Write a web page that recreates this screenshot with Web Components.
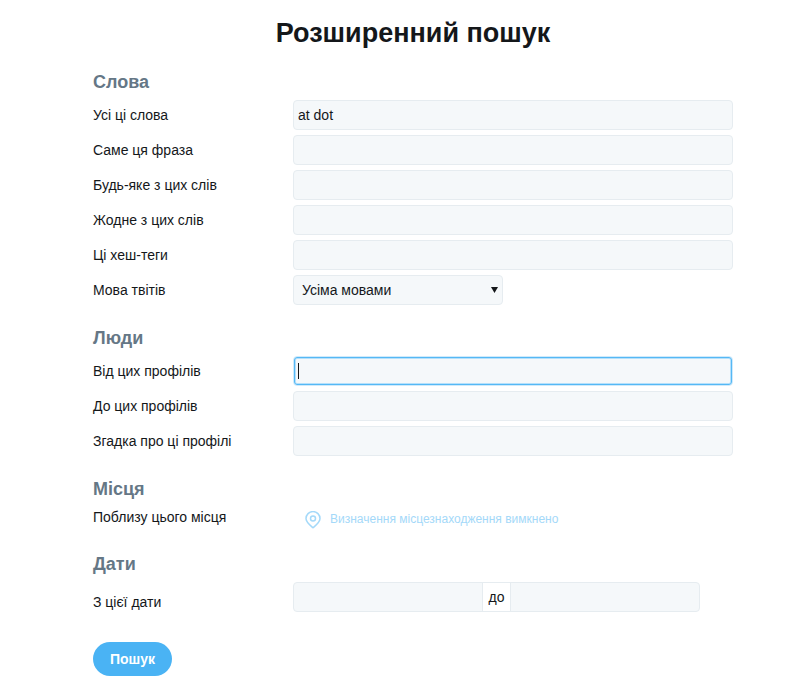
<!DOCTYPE html>
<html lang="uk"><head><meta charset="utf-8"><title>Розширений пошук</title>
<style>
html,body{margin:0;background:#fff}
body{font-family:"Liberation Sans",Arial,sans-serif;color:#14171a;font-size:14px}
</style></head><body>
<adv-page>
<adv-section heading="Слова" first>
<adv-row label="Усі ці слова"><adv-input value="at dot"></adv-input></adv-row>
<adv-row label="Саме ця фраза"><adv-input></adv-input></adv-row>
<adv-row label="Будь-яке з цих слів"><adv-input></adv-input></adv-row>
<adv-row label="Жодне з цих слів"><adv-input></adv-input></adv-row>
<adv-row label="Ці хеш-теги"><adv-input></adv-input></adv-row>
<adv-row label="Мова твітів"><adv-select value="Усіма мовами"></adv-select></adv-row>
</adv-section>
<adv-section heading="Люди" style="margin-top:17px">
<adv-row label="Від цих профілів"><adv-input focused></adv-input></adv-row>
<adv-row label="До цих профілів"><adv-input></adv-input></adv-row>
<adv-row label="Згадка про ці профілі"><adv-input></adv-input></adv-row>
</adv-section>
<adv-section heading="Місця" low style="margin-top:16px">
<adv-row label="Поблизу цього місця" compact><adv-geo>Визначення місцезнаходження вимкнено</adv-geo></adv-row>
</adv-section>
<adv-section heading="Дати" low style="margin-top:16px">
<adv-row label="З цієї дати" low style="margin-top:1px"><adv-dates></adv-dates></adv-row>
</adv-section>
<adv-button>Пошук</adv-button>
</adv-page>
<script>
function def(name,html,init){
  customElements.define(name,class extends HTMLElement{
    constructor(){super();this.attachShadow({mode:'open'}).innerHTML=html;}
    connectedCallback(){if(init)init(this,this.shadowRoot);}
  });
}
def('adv-page',`<style>
:host{display:block;width:640px;margin-left:93px;padding-bottom:22px}
h1{margin:0;font-size:27px;line-height:32px;font-weight:700;text-align:center;color:#14171a;padding-top:17px;height:49px;letter-spacing:0}
.b{display:flex;flex-direction:column}
</style><h1>Розширенний пошук</h1><div class="b"><slot></slot></div>`);
def('adv-section',`<style>
:host{display:block}
h2{margin:0;font-size:18px;line-height:22px;font-weight:700;color:#657786;height:34px;padding-top:5px;box-sizing:border-box}
:host([low]) h2{padding-top:6px}
.r{display:flex;flex-direction:column;gap:5px}
</style><h2></h2><div class="r"><slot></slot></div>`,(el,s)=>{s.querySelector('h2').textContent=el.getAttribute('heading');});
def('adv-row',`<style>
:host{display:flex;align-items:center;min-height:30px}
.l{width:200px;flex:none;font-size:14px;line-height:20px;color:#14171a}
:host([compact]) {align-items:flex-start;min-height:0;height:25px}
:host([compact]) .l{margin-top:1px}
:host([low]) .l{padding-top:10px}
.c{flex:1;min-width:0}
</style><div class="l"></div><div class="c"><slot></slot></div>`,(el,s)=>{s.querySelector('.l').textContent=el.getAttribute('label');});
def('adv-input',`<style>
:host{display:block}
.i{display:block;box-sizing:border-box;width:100%;height:30px;background:#f5f8fa;border:1px solid #e6ecf0;border-radius:4px;font-size:14px;line-height:28px;padding:0 4px;color:#14171a}
:host([focused]) .i{border-color:#cfeafb;box-shadow:inset 0 0 0 1px #55b8f5,inset 0 0 0 2px #b5e0fb;padding:0 3px;display:flex;align-items:center}
.k{display:none;width:1px;height:16px;background:#14171a;margin-left:1px}
:host([focused]) .k{display:block}
</style><div class="i"><span class="v"></span><span class="k"></span></div>`,(el,s)=>{s.querySelector('.v').textContent=el.getAttribute('value')||'';});
def('adv-select',`<style>
:host{display:block;width:210px}
.i{box-sizing:border-box;height:30px;background:#f5f8fa;border:1px solid #e6ecf0;border-radius:4px;font-size:14px;line-height:28px;padding:0 4px 0 8px;display:flex;justify-content:space-between;align-items:center;color:#14171a}
svg{display:block}
</style><div class="i"><span class="v"></span><svg width="7" height="6" viewBox="0 0 7 6"><path d="M0 0h7L3.500 6z" fill="#14171a"/></svg></div>`,(el,s)=>{s.querySelector('.v').textContent=el.getAttribute('value');});
def('adv-geo',`<style>
:host{display:flex;align-items:center;gap:9px;padding-left:12px;font-size:12px;color:#a4d9f9;height:30px;margin-top:-2px}
svg{display:block;flex:none;margin-top:2px}
</style><svg width="16" height="18" viewBox="0 0 16 18" fill="none" stroke="#a4d9f9"><path stroke-width="1.5" d="M8 16.800C5.500 14.600 1 11.400 1 7.600a7 7 0 0 1 14 0c0 3.800-4.500 7-7 9.200z"/><circle cx="8" cy="7.500" r="2.500" stroke-width="1.5"/></svg><span><slot></slot></span>`);
def('adv-dates',`<style>
:host{display:flex;width:407px;height:30px;box-sizing:border-box;border:1px solid #e6ecf0;border-radius:4px;overflow:hidden;background:#f5f8fa}
.f{flex:1}
.t{flex:none;width:29px;box-sizing:border-box;background:#fff;border-left:1px solid #e6ecf0;border-right:1px solid #e6ecf0;font-size:14px;line-height:28px;text-align:center;color:#14171a}
.a{flex:none;width:188px}
</style><div class="a"></div><div class="t">до</div><div class="f"></div>`);
def('adv-button',`<style>
:host{display:block;width:79px;height:34px;margin-top:30px;border-radius:17px;background:#4ab3f4;color:#fff;font-size:14px;font-weight:700;line-height:34px;text-align:center}
</style><slot></slot>`);
</script>
</body></html>
